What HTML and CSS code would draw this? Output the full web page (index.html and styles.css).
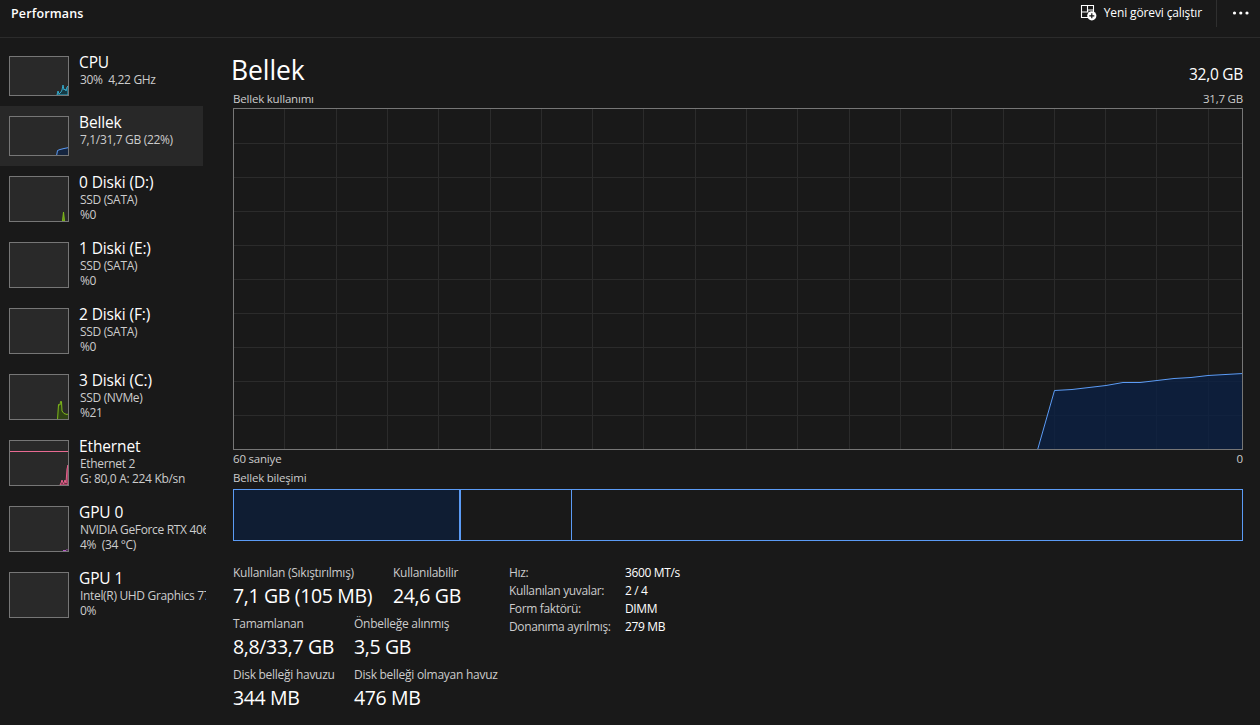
FILE: index.html
```html
<!DOCTYPE html>
<html lang="tr">
<head>
    <meta charset="UTF-8">
    <title>Performans</title>
    <link rel="stylesheet" href="styles.css">
</head>
<body>
    <header class="topbar">
        <h1 class="page-title">Performans</h1>
        <div class="actions">
            <button class="run-task">
                <svg width="17" height="17" viewBox="0 0 17 17">
                    <path d="M8 13.5H1.5V1.5H13.5V8M7.5 1.5V8M1.5 8H8.5M7.5 6H13.5" fill="none" stroke="#fff" stroke-width="1.1"/>
                    <circle cx="11.8" cy="11.8" r="4.6" fill="#fff"/>
                    <path d="M11.8 9.3V14.3M9.3 11.8H14.3" stroke="#191919" stroke-width="1.2"/>
                </svg>
                <span>Yeni görevi çalıştır</span>
            </button>
            <button class="more">
                <svg width="18" height="4" viewBox="0 0 18 4" fill="#fff">
                    <circle cx="2.5" cy="2" r="1.6"/>
                    <circle cx="8.8" cy="2" r="1.6"/>
                    <circle cx="15" cy="2" r="1.6"/>
                </svg>
            </button>
        </div>
    </header>

    <div class="content">
        <nav class="sidebar">
            <div class="item">
                <svg class="thumb short" viewBox="0 0 58 38">
                    <path d="M47 38L48 34L49 37L51 35L52 33L53 28L54 33L55 32L56 34L57 30L58 29V38Z" fill="#153a45" stroke="#35a8c8"/>
                </svg>
                <div class="item-text">
                    <div class="name">CPU</div>
                    <div class="info">30%&nbsp; 4,22 GHz</div>
                </div>
            </div>
            <div class="item selected">
                <svg class="thumb short" viewBox="0 0 58 38">
                    <path d="M46.5 39L47.5 33.5L50 32.5L54 31.5L59 30.5V39Z" fill="#15253f" stroke="#5b9bf5"/>
                </svg>
                <div class="item-text">
                    <div class="name">Bellek</div>
                    <div class="info">7,1/31,7 GB (22%)</div>
                </div>
            </div>
            <div class="item">
                <svg class="thumb" viewBox="0 0 58 44">
                    <path d="M52.5 44L53.5 35L54.5 44Z" fill="#5f8a18" stroke="#7fba1a"/>
                </svg>
                <div class="item-text">
                    <div class="name">0 Diski (D:)</div>
                    <div class="info">SSD (SATA)</div>
                    <div class="info">%0</div>
                </div>
            </div>
            <div class="item">
                <svg class="thumb" viewBox="0 0 58 44"></svg>
                <div class="item-text">
                    <div class="name">1 Diski (E:)</div>
                    <div class="info">SSD (SATA)</div>
                    <div class="info">%0</div>
                </div>
            </div>
            <div class="item">
                <svg class="thumb" viewBox="0 0 58 44"></svg>
                <div class="item-text">
                    <div class="name">2 Diski (F:)</div>
                    <div class="info">SSD (SATA)</div>
                    <div class="info">%0</div>
                </div>
            </div>
            <div class="item">
                <svg class="thumb" viewBox="0 0 58 44">
                    <path d="M47.5 45L48.5 29.5L50 30L50.5 26.5L51.5 26.5L52 36L54 38.5L57 39.5L59 38.5V45Z" fill="#2f4215" stroke="#7fba1a"/>
                </svg>
                <div class="item-text">
                    <div class="name">3 Diski (C:)</div>
                    <div class="info">SSD (NVMe)</div>
                    <div class="info">%21</div>
                </div>
            </div>
            <div class="item">
                <svg class="thumb" viewBox="0 0 58 44">
                    <path d="M0 10.5H58" stroke="#e86a92"/>
                    <path d="M50 44L51 42L52 39L53.5 43L55 39L56 42L57 28L58 24V44Z" fill="#6b3044" stroke="#e8618c"/>
                </svg>
                <div class="item-text">
                    <div class="name">Ethernet</div>
                    <div class="info">Ethernet 2</div>
                    <div class="info">G: 80,0 A: 224 Kb/sn</div>
                </div>
            </div>
            <div class="item">
                <svg class="thumb" viewBox="0 0 58 44">
                    <path d="M53 43.5H56L57 42.5L58 43.5" fill="none" stroke="#b55ac8"/>
                </svg>
                <div class="item-text">
                    <div class="name">GPU 0</div>
                    <div class="info">NVIDIA GeForce RTX 4060</div>
                    <div class="info">4%&nbsp; (34 °C)</div>
                </div>
            </div>
            <div class="item">
                <svg class="thumb" viewBox="0 0 58 44"></svg>
                <div class="item-text">
                    <div class="name">GPU 1</div>
                    <div class="info">Intel(R) UHD Graphics 770</div>
                    <div class="info">0%</div>
                </div>
            </div>
        </nav>

        <main class="details">
            <div class="heading">
                <h2>Bellek</h2>
                <span class="capacity">32,0 GB</span>
            </div>
            <div class="caption">
                <span>Bellek kullanımı</span>
                <span>31,7 GB</span>
            </div>
            <svg class="chart" viewBox="0 0 1008 340">
                <g id="grid-lines" class="grid-lines"></g>
                <path d="M803.5 341L820.5 281.5L838 280.5L872 276.5L889 273.5H906L923 271.5L940 269.5L957 268.5L974 266.5L1009 264.5V341Z" fill="#0a2045" fill-opacity="0.75"/>
                <path d="M803.5 341L820.5 281.5L838 280.5L872 276.5L889 273.5H906L923 271.5L940 269.5L957 268.5L974 266.5L1009 264.5" fill="none" stroke="#5b9bf5"/>
            </svg>
            <div class="caption axis">
                <span>60 saniye</span>
                <span>0</span>
            </div>
            <div class="caption"><span>Bellek bileşimi</span></div>
            <div class="composition">
                <div class="in-use"></div>
                <div class="standby"></div>
            </div>

            <div class="stats">
                <div class="stats-left">
                    <div class="stat-row">
                        <div class="stat wide">
                            <div class="label">Kullanılan (Sıkıştırılmış)</div>
                            <div class="value">7,1 GB (105 MB)</div>
                        </div>
                        <div class="stat">
                            <div class="label">Kullanılabilir</div>
                            <div class="value">24,6 GB</div>
                        </div>
                    </div>
                    <div class="stat-row">
                        <div class="stat">
                            <div class="label">Tamamlanan</div>
                            <div class="value">8,8/33,7 GB</div>
                        </div>
                        <div class="stat">
                            <div class="label">Önbelleğe alınmış</div>
                            <div class="value">3,5 GB</div>
                        </div>
                    </div>
                    <div class="stat-row">
                        <div class="stat">
                            <div class="label">Disk belleği havuzu</div>
                            <div class="value">344 MB</div>
                        </div>
                        <div class="stat">
                            <div class="label">Disk belleği olmayan havuz</div>
                            <div class="value">476 MB</div>
                        </div>
                    </div>
                </div>
                <dl class="hardware">
                    <dt>Hız:</dt><dd>3600 MT/s</dd>
                    <dt>Kullanılan yuvalar:</dt><dd>2 / 4</dd>
                    <dt>Form faktörü:</dt><dd>DIMM</dd>
                    <dt>Donanıma ayrılmış:</dt><dd>279 MB</dd>
                </dl>
            </div>
        </main>
    </div>

    <script>
        // grid of the memory chart
        const grid = document.getElementById('grid-lines');
        let d = '';
        for (let i = 0; i < 19; i++) {
            d += `M${Math.floor(50.95 + i * 51.29) + 0.5} 0V340`;
        }
        for (let i = 1; i < 10; i++) {
            d += `M0 ${i * 34 + 0.5}H1008`;
        }
        grid.innerHTML = `<path d="${d}"/>`;
    </script>
</body>
</html>
```

FILE: styles.css
```css
* {
    box-sizing: border-box;
}

body {
    margin: 0;
    height: 725px;
    overflow: hidden;
    background-color: #191919;
    color: #fff;
    font-family: "Open Sans", "Noto Sans", sans-serif;
    font-size: 12px;
    line-height: 15px;
    letter-spacing: -0.27px;
}

.topbar {
    display: flex;
    justify-content: space-between;
    height: 38px;
    border-bottom: 1px solid #2b2b2b;
}

.page-title {
    margin: 0;
    padding: 5px 0 0 11px;
    font-size: 12.5px;
    font-weight: 600;
    line-height: 18px;
    letter-spacing: 0.15px;
}

.actions {
    display: flex;
    height: 27px;
}

button {
    display: flex;
    align-items: center;
    padding: 0;
    border: none;
    background: none;
    color: #fff;
    font: inherit;
    letter-spacing: inherit;
}

.run-task {
    gap: 7px;
    padding: 0 14px 2px 0;
    border-right: 1px solid #2f2f2f;
    letter-spacing: -0.13px;
}

.more {
    padding: 0 10px 1px 15px;
}

.content {
    display: flex;
}

.sidebar {
    width: 206px;
    padding-top: 8px;
    overflow: hidden;
}

.item {
    display: flex;
    gap: 10px;
    width: 203px;
    padding: 10px 0 10px 9px;
}

.selected {
    background-color: #282828;
}

.thumb {
    flex: none;
    width: 60px;
    height: 46px;
    border: 1px solid #767676;
    background-color: #292929;
}

.thumb.short {
    height: 40px;
}

.item-text {
    height: 40px;
    margin-top: -4px;
    white-space: nowrap;
}

.name {
    font-size: 15.5px;
    line-height: 20px;
    letter-spacing: -0.13px;
}

.info {
    padding-left: 1px;
    color: #ccc;
    letter-spacing: -0.33px;
}

.details {
    width: 1010px;
    margin-left: 27px;
    padding-top: 13px;
}

.heading {
    display: flex;
    justify-content: space-between;
    height: 36px;
}

.heading h2 {
    margin: 0 0 0 -2px;
    font-size: 26.5px;
    font-weight: 400;
    line-height: 38px;
    letter-spacing: -0.1px;
}

.capacity {
    padding-top: 13px;
    font-size: 15.5px;
    line-height: 20px;
    letter-spacing: -0.27px;
}

.caption {
    display: flex;
    justify-content: space-between;
    margin: 4px 0 2px;
    color: #ccc;
    font-size: 11.5px;
    letter-spacing: -0.2px;
}

.chart {
    display: block;
    width: 1010px;
    height: 342px;
    border: 1px solid #767676;
}

.grid-lines {
    stroke: #2b2b2b;
}

.axis {
    margin: 1px 0 4px;
}

.composition {
    display: flex;
    height: 52px;
    margin-top: 4px;
    border: 1px solid #5b9bf5;
}

.in-use {
    width: 227px;
    border-right: 2px solid #5b9bf5;
    background-color: #0f1d33;
}

.standby {
    width: 111px;
    border-right: 1px solid #5b9bf5;
}

.stats {
    display: flex;
    margin-top: 24px;
}

.stats-left {
    width: 276px;
}

.stat-row {
    display: flex;
    height: 51px;
}

.stat {
    flex: none;
    width: 121px;
    white-space: nowrap;
}

.stat.wide {
    width: 160px;
}

.label {
    color: #ccc;
}

.value {
    margin-top: 4px;
    font-size: 19.5px;
    line-height: 24px;
    letter-spacing: -0.35px;
}

.hardware {
    display: grid;
    grid-template-columns: 116px auto;
    grid-auto-rows: 18px;
    margin: 0;
    white-space: nowrap;
    letter-spacing: -0.35px;
}

.hardware dt {
    color: #ccc;
}

.hardware dd {
    margin: 0;
}
```
